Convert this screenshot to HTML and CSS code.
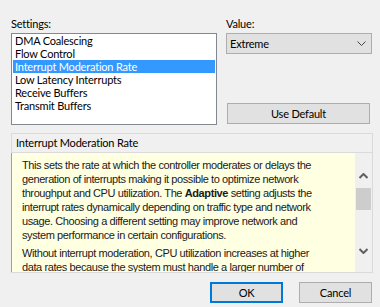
FILE: index.html
```html
<!DOCTYPE html>
<html lang="en">
<head>
  <meta charset="UTF-8" />
  <title>Advanced</title>
  <link rel="stylesheet" href="styles.css">
</head>
<body>
  <div class="top">
    <div class="col-settings">
      <div class="label">Settings:</div>
      <ul class="list">
        <li>DMA Coalescing</li>
        <li>Flow Control</li>
        <li class="selected">Interrupt Moderation Rate</li>
        <li>Low Latency Interrupts</li>
        <li>Receive Buffers</li>
        <li>Transmit Buffers</li>
      </ul>
    </div>
    <div class="col-value">
      <div class="label">Value:</div>
      <div class="select">
        <span>Extreme</span>
        <svg class="chevron" width="9" height="5" viewBox="0 0 9 5">
          <path d="M0.5 0.5 L4.5 4.5 L8.5 0.5" fill="none" stroke="#444" stroke-width="1" />
        </svg>
      </div>
      <button class="btn btn-default">Use Default</button>
    </div>
  </div>

  <div class="panel">
    <div class="panel-head">Interrupt Moderation Rate</div>
    <div class="panel-body">
      <div class="desc">
        <p>This sets the rate at which the controller moderates or delays the<br>
        generation of interrupts making it possible to optimize network<br>
        throughput and CPU utilization. The <b>Adaptive</b> setting adjusts the<br>
        interrupt rates dynamically depending on traffic type and network<br>
        usage. Choosing a different setting may improve network and<br>
        system performance in certain configurations.</p>
        <p>Without interrupt moderation, CPU utilization increases at higher<br>
        data rates because the system must handle a larger number of</p>
      </div>
      <div class="scrollbar">
        <svg class="arrow" width="9" height="6" viewBox="0 0 9 6">
          <path d="M0.5 5 L4.5 1 L8.5 5" fill="none" stroke="#606060" stroke-width="2" />
        </svg>
        <div class="track"><div class="thumb"></div></div>
        <svg class="arrow" width="9" height="6" viewBox="0 0 9 6">
          <path d="M0.5 1 L4.5 5 L8.5 1" fill="none" stroke="#606060" stroke-width="2" />
        </svg>
      </div>
    </div>
  </div>

  <div class="actions">
    <button class="btn btn-ok">OK</button>
    <button class="btn">Cancel</button>
  </div>
</body>
</html>
```

FILE: styles.css
```css
* {
  box-sizing: border-box;
}

body {
  margin: 0;
  padding: 16px 7px 0 11px;
  width: 380px;
  height: 307px;
  overflow: hidden;
  background-color: #f0f0f0;
  color: #000000;
  font-family: Lato, sans-serif;
  font-size: 11px;
  letter-spacing: -0.2px;
}

.top {
  display: flex;
  gap: 9px;
}

.label {
  height: 17px;
  line-height: 15px;
}

.col-settings {
  width: 206px;
}

.list {
  list-style: none;
  margin: 0;
  padding: 0 1px;
  height: 92px;
  background: #ffffff;
  border: 1px solid #828790;
  line-height: 13px;
}

.list li {
  padding-left: 2px;
  height: 13px;
  white-space: nowrap;
}

.list li.selected {
  background: #3399ff;
  color: #ffffff;
}

.col-value {
  width: 146px;
  display: flex;
  flex-direction: column;
}

.select {
  height: 21px;
  display: flex;
  align-items: center;
  justify-content: space-between;
  padding: 0 5px 0 3px;
  background: #e1e1e1;
  border: 1px solid #adadad;
}

.btn {
  height: 21px;
  background: #e1e1e1;
  border: 1px solid #adadad;
  font-family: Lato, sans-serif;
  font-size: 11px;
  letter-spacing: -0.2px;
  line-height: 14px;
  color: #000000;
  padding: 0;
}

.btn-default {
  width: 143px;
  margin: 49px 0 0 1px;
}

.panel {
  margin-top: 8px;
  width: 362px;
  height: 140px;
  border: 1px solid #dadada;
  display: flex;
  flex-direction: column;
}

.panel-head {
  height: 19px;
  line-height: 18px;
  padding-left: 4px;
  background: #f0f0f0;
  border-bottom: 1px solid #dadada;
}

.panel-body {
  flex: 1;
  display: flex;
  overflow: hidden;
  border-left: 1px solid #a0a0a0;
  margin-left: -1px;
}

.desc {
  flex: 1;
  min-width: 0;
  background: #ffffe1;
  padding: 5px 4px 0 10px;
  font-family: "Liberation Sans", Arial, sans-serif;
  font-size: 11px;
  letter-spacing: -0.4px;
  line-height: 14px;
  color: #1a1a1a;
  white-space: nowrap;
  overflow: hidden;
}

.desc p {
  margin: 0 0 4px 0;
}

.scrollbar {
  flex: none;
  width: 17px;
  background: #f0f0f0;
  display: flex;
  flex-direction: column;
  align-items: center;
  padding: 20px 0 18px 0;
}

.arrow {
  flex: none;
}

.track {
  flex: 1;
  width: 100%;
  padding-top: 9px;
}

.thumb {
  height: 22px;
  margin: 0 1px;
  background: #cdcdcd;
}

.actions {
  display: flex;
  justify-content: flex-end;
  gap: 16px;
  padding-right: 1px;
  margin-top: 9px;
}

.actions .btn {
  width: 73px;
}

.btn-ok {
  border: 2px solid #0078d7;
}
```
